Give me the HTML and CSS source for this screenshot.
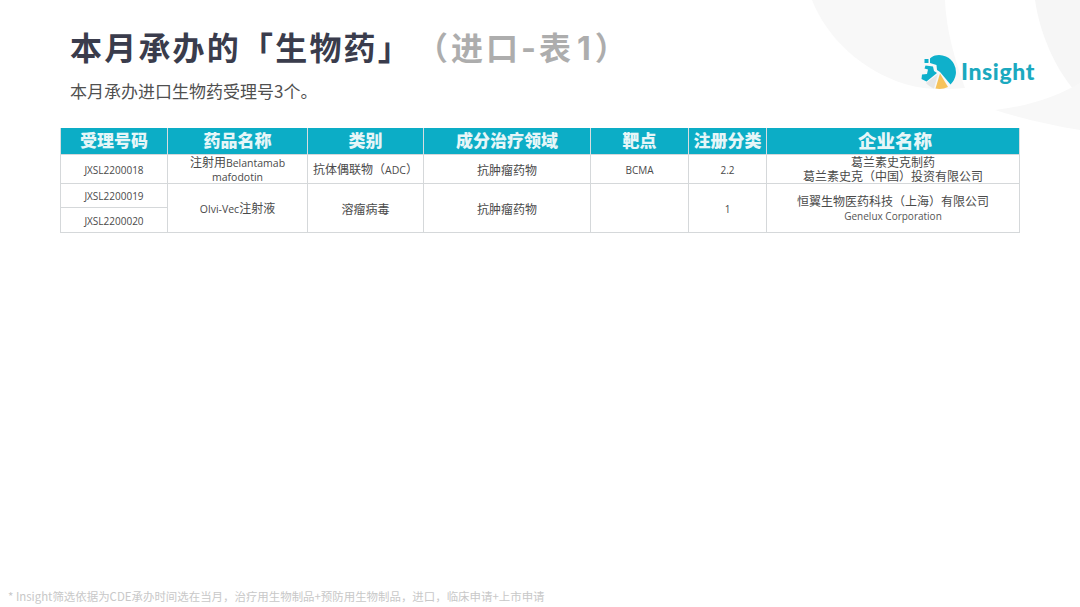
FILE: index.html
```html
<!DOCTYPE html>
<html lang="zh-CN">
<head>
<meta charset="utf-8">
<title>本月承办的「生物药」</title>
<link rel="stylesheet" href="styles.css">
</head>
<body>
<div class="slide">
  <svg class="decor" viewBox="0 0 1080 607" width="1080" height="607" aria-hidden="true">
    <path d="M812 0 C826 36 860 70 905 84 C925 90 945 90 965 88 C955 60 946 30 945 0 Z" fill="#f8f8f8"/>
    <path d="M1035 0 C1040 34 1055 70 1080 97 L1080 0 Z" fill="#f6f6f6"/>
    <path d="M995 110 C1030 106 1058 96 1080 83 L1080 130 C1050 125 1020 118 995 110 Z" fill="#f8f8f8"/>
  </svg>
  <header class="head">
    <div class="titles">
      <h1 class="title">本月承办的「生物药」<span class="sub">（进口-表<span class="num">1</span>）</span></h1>
      <p class="lead">本月承办进口生物药受理号3个。</p>
    </div>
    <div class="logo">
      <svg class="logo-mark" viewBox="0 0 36 36" width="36" height="36" aria-hidden="true">
        <path d="M15 1.5 A17 17 0 0 1 30.5 30.5 L20 18 L17 16 L16.5 11 L10 9 L10 4.5 C11.5 3 13 2 15 1.5 Z" fill="#0fb0cb"/>
        <path d="M1.5 25 L2 20.5 L7 20 L8 15.5 L4.5 14.5 L5.5 11.5 L13 12.5 L14 17 L17 19 L6.5 27.5 Z" fill="#0fb0cb"/>
        <rect x="4.5" y="5" width="4" height="4" fill="#0fb0cb"/>
        <path d="M6 29 L18 20 L14 34.5 C11 33.5 8 31.5 6 29 Z" fill="#e6e6e6"/>
        <path d="M20 19.5 L28 33 C24 35 19.500 35.500 15.500 34.500 Z" fill="#f6c25a"/>
      </svg>
      <span class="logo-text">Insight</span>
    </div>
  </header>
  <table class="grid">
    <colgroup>
      <col class="c1"><col class="c2"><col class="c3"><col class="c4"><col class="c5"><col class="c6"><col class="c7">
    </colgroup>
    <thead>
      <tr><th>受理号码</th><th>药品名称</th><th>类别</th><th>成分治疗领域</th><th>靶点</th><th>注册分类</th><th class="wide">企业名称</th></tr>
    </thead>
    <tbody>
      <tr class="r1">
        <td class="id">JXSL2200018</td>
        <td class="tight">注射用<span class="lat">Belantamab</span><br><span class="lat">mafodotin</span></td>
        <td class="mid">抗体偶联物（<span class="lat">ADC</span>）</td>
        <td class="mid">抗肿瘤药物</td>
        <td class="latin">BCMA</td>
        <td class="latin">2.2</td>
        <td class="tight">葛兰素史克制药<br>葛兰素史克（中国）投资有限公司</td>
      </tr>
      <tr class="r2">
        <td class="id">JXSL2200019</td>
        <td rowspan="2" class="mid"><span class="lat">Olvi-Vec</span>注射液</td>
        <td rowspan="2" class="mid">溶瘤病毒</td>
        <td rowspan="2" class="mid">抗肿瘤药物</td>
        <td rowspan="2"></td>
        <td rowspan="2" class="latin">1</td>
        <td rowspan="2" class="co">恒翼生物医药科技（上海）有限公司<br><span class="en">Genelux Corporation</span></td>
      </tr>
      <tr class="r3"><td class="id">JXSL2200020</td></tr>
    </tbody>
  </table>
  <div class="spacer"></div>
  <footer class="note">* Insight筛选依据为CDE承办时间选在当月，治疗用生物制品+预防用生物制品，进口，临床申请+上市申请</footer>
</div>
</body>
</html>
```
FILE: styles.css
```css
* { box-sizing: border-box; }
html, body { margin: 0; padding: 0; background: #fff; }
body { font-family: "Open Sans", "Noto Sans CJK SC", sans-serif; color: #3c3c3c; }
.slide { position: relative; width: 1080px; height: 607px; overflow: hidden; display: flex; flex-direction: column; background: #fff; }
.decor { position: absolute; left: 0; top: 0; }
.head { position: relative; display: flex; justify-content: space-between; align-items: flex-start; height: 128px; padding: 29px 44px 0 70px; }
.title { margin: 0; font-family: "Inter", "Noto Sans CJK SC", sans-serif; font-size: 32px; line-height: 40px; font-weight: 700; letter-spacing: 2.2px; color: #3a3c4c; white-space: nowrap; }
.sub { color: #adadad; margin-left: 20px; letter-spacing: 3px; }
.num { letter-spacing: 4px; margin-left: 3px; }
.lead { margin: -1px 0 0; padding-top: 3px; font-family: "Noto Sans CJK SC", sans-serif; font-size: 17px; line-height: 40px; color: #505050; font-weight: 400; }
.logo { display: flex; align-items: center; gap: 5px; margin-top: 25px; margin-right: 1px; }
.logo-text { padding-bottom: 2px; font-family: "Lato", "Open Sans", sans-serif; font-size: 23px; font-weight: 900; letter-spacing: .6px; color: #1ba9bf; line-height: 34px; }
.grid { position: relative; margin-left: 60px; width: 959px; border-collapse: collapse; table-layout: fixed; }
.c1 { width: 107px; } .c2 { width: 140px; } .c3 { width: 116px; } .c4 { width: 167px; } .c5 { width: 98px; } .c6 { width: 78px; } .c7 { width: 253px; }
.grid th { height: 26px; padding: 0 0 2px; background: #0cadc6; color: #e6f6f8; font-family: "Noto Sans CJK SC", sans-serif; font-size: 17px; line-height: 20px; font-weight: 900; border: 1px solid #d7dde0; border-top: 0; border-bottom: 0; }
.grid th.wide { font-size: 18.5px; padding-left: 4px; }
.grid td { padding: 0; text-align: center; vertical-align: middle; border: 1px solid #d5d8da; font-family: "Noto Sans CJK SC", "Open Sans", sans-serif; font-size: 12px; line-height: 13px; color: #4a4a4a; }
.grid .id, .grid .latin { padding-top: 3px; font-family: "Open Sans", "Noto Sans CJK SC", sans-serif; font-size: 10px; }
.grid .mid { padding-top: 1px; }
.lat { font-family: "Open Sans", sans-serif; font-size: 10.5px; line-height: 1; }
.grid .tight { line-height: 14px; }
.grid .co { line-height: 14px; }
.en { font-family: "Open Sans", sans-serif; font-size: 10px; line-height: 1; color: #555; }
.r1 { height: 29px; } .r2 { height: 24px; } .r3 { height: 25px; }
.spacer { flex: 1; }
.note { position: relative; padding: 0 0 3px 8px; font-family: "Noto Sans CJK SC", sans-serif; font-size: 11.45px; line-height: 16px; color: #c8c8c8; white-space: nowrap; }
```
